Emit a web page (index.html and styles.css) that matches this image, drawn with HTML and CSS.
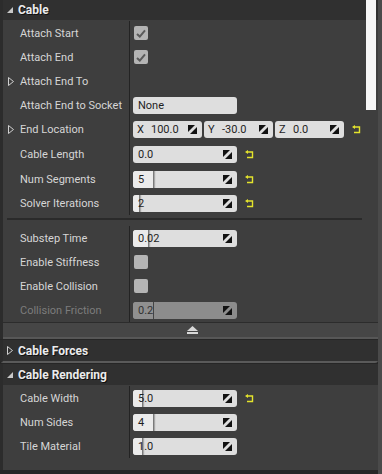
FILE: index.html
```html
<!DOCTYPE html>
<html lang="en">
<head>
    <meta charset="UTF-8">
    <title>Details - Cable</title>
    <link rel="stylesheet" href="styles.css">
</head>
<body>
    <div class="details">
        <div class="category">
            <div class="cat-header">
                <svg class="cat-arrow" width="6" height="6" viewBox="0 0 6 6"><polygon points="6,0 6,6 0,6" fill="#c8c8c8"/></svg>
                <span>Cable</span>
            </div>
            <div class="group">
                <div class="row">
                    <div class="name"><span class="twisty"></span>Attach Start</div>
                    <div class="value"><span class="check"><svg width="10" height="9" viewBox="0 0 10 9"><path d="M1 5 L3.8 7.6 L9 1.4" fill="none" stroke="#5a5a5a" stroke-width="2"/></svg></span></div>
                </div>
                <div class="row">
                    <div class="name"><span class="twisty"></span>Attach End</div>
                    <div class="value"><span class="check"><svg width="10" height="9" viewBox="0 0 10 9"><path d="M1 5 L3.8 7.6 L9 1.4" fill="none" stroke="#5a5a5a" stroke-width="2"/></svg></span></div>
                </div>
                <div class="row">
                    <div class="name"><span class="twisty"><svg width="6" height="9" viewBox="0 0 6 9"><polygon points="0.5,0.5 5.5,4.5 0.5,8.5" fill="none" stroke="#cfcfcf"/></svg></span>Attach End To</div>
                    <div class="value"></div>
                </div>
                <div class="row">
                    <div class="name"><span class="twisty"></span>Attach End to Socket</div>
                    <div class="value"><span class="field">None</span></div>
                </div>
                <div class="row tall">
                    <div class="name"><span class="twisty"><svg width="6" height="9" viewBox="0 0 6 9"><polygon points="0.5,0.5 5.5,4.5 0.5,8.5" fill="none" stroke="#cfcfcf"/></svg></span>End Location</div>
                    <div class="value">
                        <span class="field axis"><b>X</b>100.0<svg class="spin" width="9" height="9" viewBox="0 0 9 9"><polygon points="0,0 7,0 0,7"/><polygon points="9,2 9,9 2,9"/></svg></span>
                        <span class="field axis"><b>Y</b>-30.0<svg class="spin" width="9" height="9" viewBox="0 0 9 9"><polygon points="0,0 7,0 0,7"/><polygon points="9,2 9,9 2,9"/></svg></span>
                        <span class="field axis"><b>Z</b>0.0<svg class="spin" width="9" height="9" viewBox="0 0 9 9"><polygon points="0,0 7,0 0,7"/><polygon points="9,2 9,9 2,9"/></svg></span>
                        <svg class="reset" width="9" height="9" viewBox="0 0 9 9"><path d="M2.5 2 H7.5 V7.5 H2" fill="none" stroke="#e4e42c" stroke-width="1.4"/><polygon points="0,2 3,0 3,4" fill="#e4e42c"/></svg>
                    </div>
                </div>
                <div class="row tall">
                    <div class="name"><span class="twisty"></span>Cable Length</div>
                    <div class="value">
                        <span class="field">0.0<svg class="spin" width="9" height="9" viewBox="0 0 9 9"><polygon points="0,0 7,0 0,7"/><polygon points="9,2 9,9 2,9"/></svg></span>
                        <svg class="reset" width="9" height="9" viewBox="0 0 9 9"><path d="M2.5 2 H7.5 V7.5 H2" fill="none" stroke="#e4e42c" stroke-width="1.4"/><polygon points="0,2 3,0 3,4" fill="#e4e42c"/></svg>
                    </div>
                </div>
                <div class="row">
                    <div class="name"><span class="twisty"></span>Num Segments</div>
                    <div class="value">
                        <span class="field"><span class="fill" style="width: 20px"></span>5<svg class="spin" width="9" height="9" viewBox="0 0 9 9"><polygon points="0,0 7,0 0,7"/><polygon points="9,2 9,9 2,9"/></svg></span>
                        <svg class="reset" width="9" height="9" viewBox="0 0 9 9"><path d="M2.5 2 H7.5 V7.5 H2" fill="none" stroke="#e4e42c" stroke-width="1.4"/><polygon points="0,2 3,0 3,4" fill="#e4e42c"/></svg>
                    </div>
                </div>
                <div class="row">
                    <div class="name"><span class="twisty"></span>Solver Iterations</div>
                    <div class="value">
                        <span class="field"><span class="fill" style="width: 6px"></span>2<svg class="spin" width="9" height="9" viewBox="0 0 9 9"><polygon points="0,0 7,0 0,7"/><polygon points="9,2 9,9 2,9"/></svg></span>
                        <svg class="reset" width="9" height="9" viewBox="0 0 9 9"><path d="M2.5 2 H7.5 V7.5 H2" fill="none" stroke="#e4e42c" stroke-width="1.4"/><polygon points="0,2 3,0 3,4" fill="#e4e42c"/></svg>
                    </div>
                </div>
            </div>
            <div class="separator"></div>
            <div class="group">
                <div class="row">
                    <div class="name"><span class="twisty"></span>Substep Time</div>
                    <div class="value">
                        <span class="field"><span class="fill" style="width: 15px"></span>0.02<svg class="spin" width="9" height="9" viewBox="0 0 9 9"><polygon points="0,0 7,0 0,7"/><polygon points="9,2 9,9 2,9"/></svg></span>
                    </div>
                </div>
                <div class="row">
                    <div class="name"><span class="twisty"></span>Enable Stiffness</div>
                    <div class="value"><span class="check"></span></div>
                </div>
                <div class="row">
                    <div class="name"><span class="twisty"></span>Enable Collision</div>
                    <div class="value"><span class="check"></span></div>
                </div>
                <div class="row disabled">
                    <div class="name"><span class="twisty"></span>Collision Friction</div>
                    <div class="value">
                        <span class="field"><span class="fill" style="width: 20px"></span>0.2<svg class="spin" width="9" height="9" viewBox="0 0 9 9"><polygon points="0,0 7,0 0,7"/><polygon points="9,2 9,9 2,9"/></svg></span>
                    </div>
                </div>
            </div>
            <div class="advanced">
                <svg width="11" height="8" viewBox="0 0 11 8"><polygon points="5.5,0 11,5 0,5" fill="#d8d8d8"/><rect x="0" y="6" width="11" height="2" fill="#d8d8d8"/></svg>
            </div>
        </div>

        <div class="category closed">
            <div class="cat-header">
                <svg class="cat-arrow" width="6" height="9" viewBox="0 0 6 9"><polygon points="0.5,0.5 5.5,4.5 0.5,8.5" fill="none" stroke="#cfcfcf"/></svg>
                <span>Cable Forces</span>
            </div>
        </div>

        <div class="category">
            <div class="cat-header">
                <svg class="cat-arrow" width="6" height="6" viewBox="0 0 6 6"><polygon points="6,0 6,6 0,6" fill="#c8c8c8"/></svg>
                <span>Cable Rendering</span>
            </div>
            <div class="group last">
                <div class="row">
                    <div class="name"><span class="twisty"></span>Cable Width</div>
                    <div class="value">
                        <span class="field"><span class="fill" style="width: 9px"></span>5.0<svg class="spin" width="9" height="9" viewBox="0 0 9 9"><polygon points="0,0 7,0 0,7"/><polygon points="9,2 9,9 2,9"/></svg></span>
                        <svg class="reset" width="9" height="9" viewBox="0 0 9 9"><path d="M2.5 2 H7.5 V7.5 H2" fill="none" stroke="#e4e42c" stroke-width="1.4"/><polygon points="0,2 3,0 3,4" fill="#e4e42c"/></svg>
                    </div>
                </div>
                <div class="row">
                    <div class="name"><span class="twisty"></span>Num Sides</div>
                    <div class="value">
                        <span class="field"><span class="fill" style="width: 20px"></span>4<svg class="spin" width="9" height="9" viewBox="0 0 9 9"><polygon points="0,0 7,0 0,7"/><polygon points="9,2 9,9 2,9"/></svg></span>
                    </div>
                </div>
                <div class="row">
                    <div class="name"><span class="twisty"></span>Tile Material</div>
                    <div class="value">
                        <span class="field"><span class="fill" style="width: 9px"></span>1.0<svg class="spin" width="9" height="9" viewBox="0 0 9 9"><polygon points="0,0 7,0 0,7"/><polygon points="9,2 9,9 2,9"/></svg></span>
                    </div>
                </div>
            </div>
        </div>

        <div class="scrollbar"></div>
    </div>
</body>
</html>
```

FILE: styles.css
```css
body {
    margin: 0;
    background: #4a4a4a;
    font-family: Roboto, 'Liberation Sans', sans-serif;
    font-size: 11px;
    color: #d6d6d6;
}

.details {
    position: relative;
    width: 378px;
    height: 474px;
    background: #262626;
    overflow: hidden;
}

.category {
    border-left: 3px solid #2c2c2c;
    background: #3e3e3e;
}

.cat-header {
    display: flex;
    align-items: center;
    height: 20px;
    padding-left: 4px;
    background: #303030;
    color: #ececec;
    font-weight: bold;
    font-size: 12px;
    text-shadow: 1px 1px 0 #111;
}

.cat-arrow {
    margin-right: 5px;
}

.group {
    display: flex;
    flex-direction: column;
    padding-top: 1px;
}

.group.last {
    padding-bottom: 12px;
}

.row {
    display: flex;
    height: 24px;
}

.row.tall {
    height: 25px;
}

.name {
    display: flex;
    align-items: center;
    width: 121px;
    padding-left: 5px;
    border-right: 1px solid #232323;
    white-space: nowrap;
}

.twisty {
    display: flex;
    align-items: center;
    width: 12px;
}

.value {
    display: flex;
    align-items: center;
    gap: 2px;
    padding-left: 3px;
}

.field {
    position: relative;
    isolation: isolate;
    display: flex;
    align-items: center;
    box-sizing: border-box;
    width: 104px;
    height: 17px;
    padding: 0 5px;
    border-radius: 3px;
    background: #dedede;
    color: #1e1e1e;
    overflow: hidden;
}

.field.axis {
    width: 69px;
    padding-left: 4px;
}

.field b {
    font-weight: normal;
    width: 14px;
}

.fill {
    position: absolute;
    z-index: -1;
    left: 0;
    top: 0;
    bottom: 0;
    background: #ebebeb;
    border-right: 1px solid #7a7a7a;
    box-shadow: 1px 0 1px #a8a8a8;
}

.spin {
    margin-left: auto;
    fill: #111;
}

.reset {
    margin-left: 6px;
}

.check {
    display: flex;
    align-items: center;
    justify-content: center;
    width: 14px;
    height: 14px;
    margin-left: 1px;
    border-radius: 2px;
    background: #b4b4b4;
}

.disabled .name {
    color: #7c7c7c;
}

.disabled .field {
    background: #8c8c8c;
    color: #333;
}

.disabled .fill {
    background: #909090;
    border-right-color: #444;
    box-shadow: none;
}

.separator {
    height: 10px;
    box-sizing: border-box;
    margin: 0 16px 0 4px;
    border-top: 3px solid #3e3e3e;
    background: linear-gradient(#2a2a2a 0 2px, transparent 2px);
}

.advanced {
    display: flex;
    justify-content: center;
    align-items: center;
    height: 14px;
    border-top: 1px solid #2c2c2c;
    border-bottom: 2px solid #575757;
    background: #464646;
    padding-left: 4px;
}

.category.closed {
    margin-top: 1px;
    border-bottom: 2px solid #5a5a5a;
    border-radius: 0 0 3px 3px;
}

.category.closed .cat-header {
    height: 21px;
}

.closed + .category {
    margin-top: 1px;
}

.closed + .category .cat-header {
    height: 21px;
}

.scrollbar {
    position: absolute;
    left: 366px;
    top: 0;
    width: 10px;
    height: 110px;
    background: #f6f6f6;
}
```
